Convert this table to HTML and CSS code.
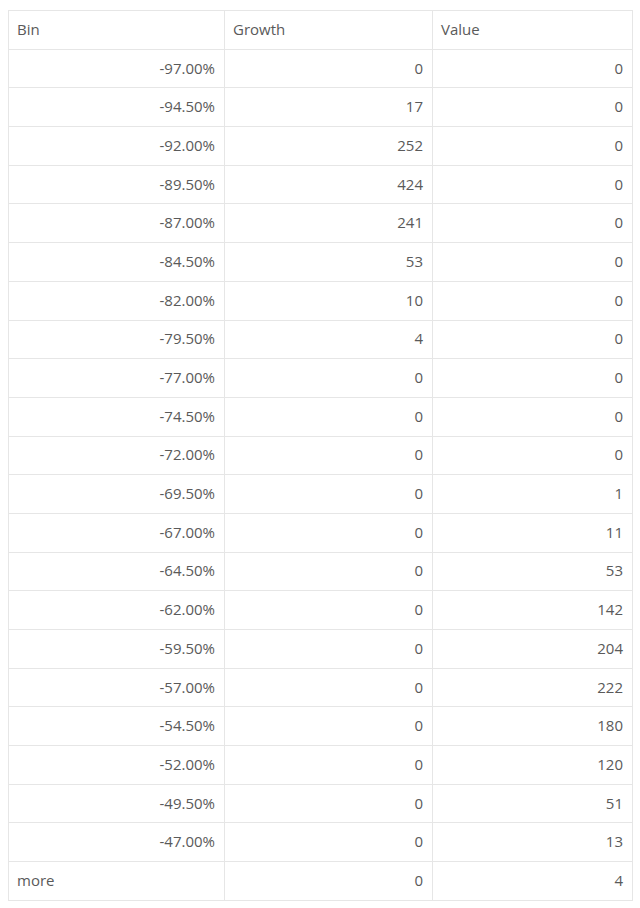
FILE: index.html
```html
<!DOCTYPE html>
<html>
<head>
<meta charset="utf-8">
<link rel="stylesheet" href="styles.css">
</head>
<body>
<table class="grid">
  <colgroup>
    <col class="c1"><col class="c2"><col class="c3">
  </colgroup>
  <thead>
    <tr><th>Bin</th><th>Growth</th><th>Value</th></tr>
  </thead>
  <tbody>
    <tr><td>-97.00%</td><td>0</td><td>0</td></tr>
    <tr><td>-94.50%</td><td>17</td><td>0</td></tr>
    <tr><td>-92.00%</td><td>252</td><td>0</td></tr>
    <tr><td>-89.50%</td><td>424</td><td>0</td></tr>
    <tr><td>-87.00%</td><td>241</td><td>0</td></tr>
    <tr><td>-84.50%</td><td>53</td><td>0</td></tr>
    <tr><td>-82.00%</td><td>10</td><td>0</td></tr>
    <tr><td>-79.50%</td><td>4</td><td>0</td></tr>
    <tr><td>-77.00%</td><td>0</td><td>0</td></tr>
    <tr><td>-74.50%</td><td>0</td><td>0</td></tr>
    <tr><td>-72.00%</td><td>0</td><td>0</td></tr>
    <tr><td>-69.50%</td><td>0</td><td>1</td></tr>
    <tr><td>-67.00%</td><td>0</td><td>11</td></tr>
    <tr><td>-64.50%</td><td>0</td><td>53</td></tr>
    <tr><td>-62.00%</td><td>0</td><td>142</td></tr>
    <tr><td>-59.50%</td><td>0</td><td>204</td></tr>
    <tr><td>-57.00%</td><td>0</td><td>222</td></tr>
    <tr><td>-54.50%</td><td>0</td><td>180</td></tr>
    <tr><td>-52.00%</td><td>0</td><td>120</td></tr>
    <tr><td>-49.50%</td><td>0</td><td>51</td></tr>
    <tr><td>-47.00%</td><td>0</td><td>13</td></tr>
    <tr><td class="label">more</td><td>0</td><td>4</td></tr>
  </tbody>
</table>
</body>
</html>
```
FILE: styles.css
```css
html, body {
  margin: 0;
  padding: 0;
  background: #ffffff;
}
body {
  padding: 10px 0 0 8px;
  font-family: "Open Sans", "Noto Sans", sans-serif;
  font-size: 15px;
  color: #5a5a5a;
}
.grid {
  border-collapse: collapse;
  table-layout: fixed;
  width: 624px;
}
.c1 { width: 216px; }
.c2 { width: 208px; }
.c3 { width: 200px; }
.grid th,
.grid td {
  border: 1px solid #e6e6e6;
  height: 38.7px;
  padding: 0 9px 2px 8px;
  vertical-align: middle;
  box-sizing: border-box;
}
.grid th {
  font-weight: normal;
  text-align: left;
}
.grid td {
  text-align: right;
}
.grid td.label {
  text-align: left;
}
```
